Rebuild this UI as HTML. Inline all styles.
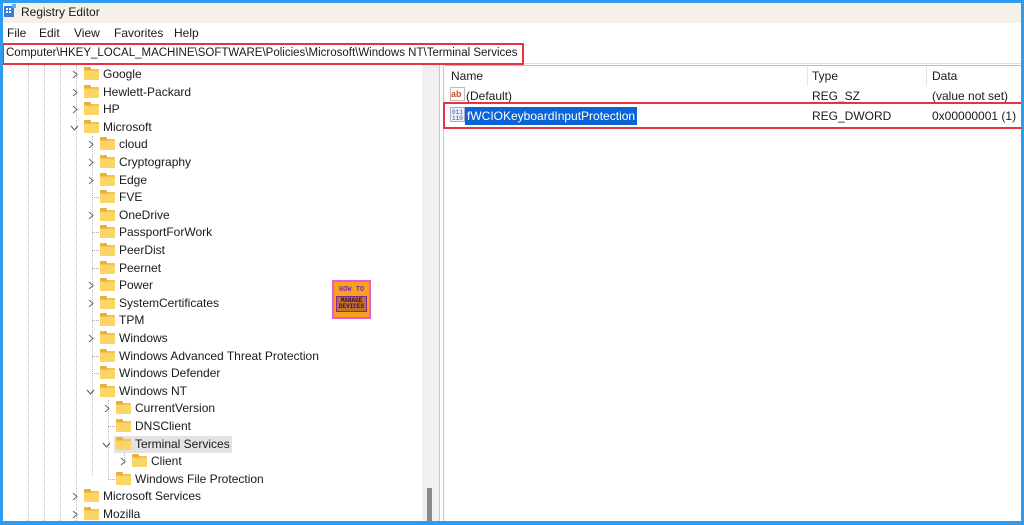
<!DOCTYPE html>
<html><head><meta charset="utf-8"><style>
*{margin:0;padding:0;box-sizing:border-box}
body{width:1024px;height:525px;overflow:hidden;font-family:"Liberation Sans",sans-serif;font-size:12px;color:#1a1a1a;background:#fff;position:relative}
.frame{position:absolute;left:0;top:0;width:1024px;height:525px;border:3px solid #2e9bf0;border-bottom-width:4px;z-index:10;pointer-events:none}
.title{position:absolute;left:0;top:0;width:1024px;height:23px;background:#f5f0e8}
.title span{position:absolute;left:21px;top:5px;font-size:12px}
.menu{position:absolute;left:0;top:23px;width:1024px;height:20px;background:#fff}
.menu span{position:absolute;top:3px;font-size:12px}
.addr{position:absolute;left:0;top:43px;width:1024px;height:21px;background:#fff;border-bottom:1px solid #e0e0e0}
.addr span{position:absolute;left:6px;top:4px;font-size:11.5px}
.redbox{position:absolute;border:2px solid #e8333f;z-index:5}
.row{position:absolute;height:17px;line-height:17px;white-space:nowrap}
.fd{position:absolute;width:15px;height:11px;top:3px;background:#f4c24a;border-radius:1px}
.fd:before{content:"";position:absolute;left:0;top:-2px;width:7px;height:3px;background:#e8b23a;border-radius:1px 1px 0 0}
.fd:after{content:"";position:absolute;left:0;top:2px;width:15px;height:9px;background:#fbd566}
.ch{position:absolute;top:0;font-size:10px;color:#666}
.vl{position:absolute;width:0;border-left:1px dotted #bbb}
.hl{position:absolute;height:0;border-top:1px dotted #aaa;width:7px}
</style></head><body>
<div class="title"><svg style="position:absolute;left:4px;top:4px" width="13" height="14"><rect x="0" y="2" width="10" height="11" fill="#3a7bd5"/><rect x="2" y="4" width="2" height="2" fill="#fff"/><rect x="5" y="4" width="2" height="2" fill="#fff"/><rect x="2" y="7" width="2" height="2" fill="#fff"/><rect x="5" y="7" width="2" height="2" fill="#fff"/><rect x="8" y="0" width="4" height="4" fill="#58b0f0"/></svg><span>Registry Editor</span></div>
<div class="menu"><span style="left:7px">File</span><span style="left:39px">Edit</span><span style="left:74px">View</span><span style="left:114px">Favorites</span><span style="left:174px">Help</span></div>
<div class="addr"><span>Computer\HKEY_LOCAL_MACHINE\SOFTWARE\Policies\Microsoft\Windows NT\Terminal Services</span></div>
<div class="redbox" style="left:2px;top:43px;width:522px;height:22px"></div>

<div class="vl" style="left:28px;top:65px;height:460px"></div>
<div class="vl" style="left:44px;top:65px;height:460px"></div>
<div class="vl" style="left:60px;top:65px;height:460px"></div>
<div class="vl" style="left:76px;top:65px;height:460px"></div>
<div class="vl" style="left:92px;top:136px;height:340px"></div>
<div class="vl" style="left:108px;top:400px;height:80px"></div>
<div class="vl" style="left:124px;top:452px;height:12px"></div>

<div style="position:absolute;left:422px;top:65px;width:17px;height:460px;background:#f0f0f0"></div>
<div style="position:absolute;left:427px;top:488px;width:5px;height:37px;background:#8a8a8a"></div>
<div style="position:absolute;left:439px;top:65px;width:1px;height:460px;background:#c8c8c8"></div>
<div style="position:absolute;left:443px;top:65px;width:1px;height:460px;background:#c8c8c8"></div>

<div id="tree"></div>
<script>
var items=[
[0,1,"Google"],[0,1,"Hewlett-Packard"],[0,1,"HP"],[0,2,"Microsoft"],
[1,1,"cloud"],[1,1,"Cryptography"],[1,1,"Edge"],[1,0,"FVE"],[1,1,"OneDrive"],[1,0,"PassportForWork"],[1,0,"PeerDist"],[1,0,"Peernet"],[1,1,"Power"],[1,1,"SystemCertificates"],[1,0,"TPM"],[1,1,"Windows"],[1,0,"Windows Advanced Threat Protection"],[1,0,"Windows Defender"],[1,2,"Windows NT"],
[2,1,"CurrentVersion"],[2,0,"DNSClient"],[2,2,"Terminal Services"],[3,1,"Client"],[2,0,"Windows File Protection"],
[0,1,"Microsoft Services"],[0,1,"Mozilla"]];
var h="";
items.forEach(function(it,i){
 var top=66+i*17.6, x=84+it[0]*16;
 h+='<div class="row" style="left:0;top:'+top+'px;width:420px">';
 if(it[1]==1) h+='<span class="ch" style="left:'+(x-12)+'px"><svg width="6" height="9" style="margin-top:4px"><path d="M1 1l4 3.5L1 8" stroke="#666" fill="none"/></svg></span>';
 else if(it[1]==2) h+='<span class="ch" style="left:'+(x-14)+'px"><svg width="9" height="6" style="margin-top:6px"><path d="M1 1l3.5 4L8 1" stroke="#555" fill="none"/></svg></span>';
 else h+='<span class="hl" style="left:'+(x-8)+'px;top:8px"></span>';
 if(it[2]=="Terminal Services") h+='<span style="position:absolute;left:'+(x-2)+'px;top:0;width:118px;height:17px;background:#e3e3e3"></span>';
 h+='<span class="fd" style="left:'+x+'px"></span><span style="position:absolute;left:'+(x+19)+'px;top:0">'+it[2]+'</span></div>';
});
document.getElementById("tree").innerHTML=h;
</script>

<div style="position:absolute;left:332px;top:280px;width:39px;height:39px;background:#f7a21b;border:2px solid #e85ad8;font-family:'Liberation Mono',monospace;font-weight:bold;color:#8a2ab0;font-size:7px;line-height:8px;text-align:center;padding-top:4px">HOW TO<div style="border:1px solid #7a2aa0;background:#c0702a;margin:2px 2px 0;font-size:6px;line-height:6px;padding:1px 0;color:#3a1050">MANAGE<br>DEVICES</div></div>

<div style="position:absolute;left:445px;top:65px;width:576px;height:1px;background:#bdbdbd"></div>
<span style="position:absolute;left:451px;top:69px">Name</span>
<span style="position:absolute;left:812px;top:69px">Type</span>
<span style="position:absolute;left:932px;top:69px">Data</span>
<div style="position:absolute;left:807px;top:66px;width:1px;height:20px;background:#e5e5e5"></div>
<div style="position:absolute;left:926px;top:66px;width:1px;height:20px;background:#e5e5e5"></div>
<svg style="position:absolute;left:450px;top:87px" width="15" height="14"><rect x="0.5" y="0.5" width="14" height="13" fill="#fff" stroke="#bbb"/><text x="1" y="10" font-size="9" font-family="Liberation Sans" font-weight="bold" fill="#d64a2a">ab</text></svg>
<span style="position:absolute;left:466px;top:89px">(Default)</span>
<span style="position:absolute;left:812px;top:89px">REG_SZ</span>
<span style="position:absolute;left:932px;top:89px">(value not set)</span>
<svg style="position:absolute;left:450px;top:107px" width="15" height="15"><rect x="0.5" y="0.5" width="14" height="14" fill="#eef2fa" stroke="#aab"/><text x="2" y="7" font-size="6" font-family="Liberation Mono" fill="#2a4aa0">011</text><text x="2" y="13" font-size="6" font-family="Liberation Mono" fill="#2a4aa0">110</text></svg>
<span style="position:absolute;left:465px;top:107px;height:18px;line-height:18px;padding:0 2px;background:#0a64d8;color:#fff">fWCIOKeyboardInputProtection</span>
<span style="position:absolute;left:812px;top:109px">REG_DWORD</span>
<span style="position:absolute;left:932px;top:109px">0x00000001 (1)</span>
<div class="redbox" style="left:443px;top:102px;width:580px;height:27px"></div>

<div class="frame"></div>
</body></html>
